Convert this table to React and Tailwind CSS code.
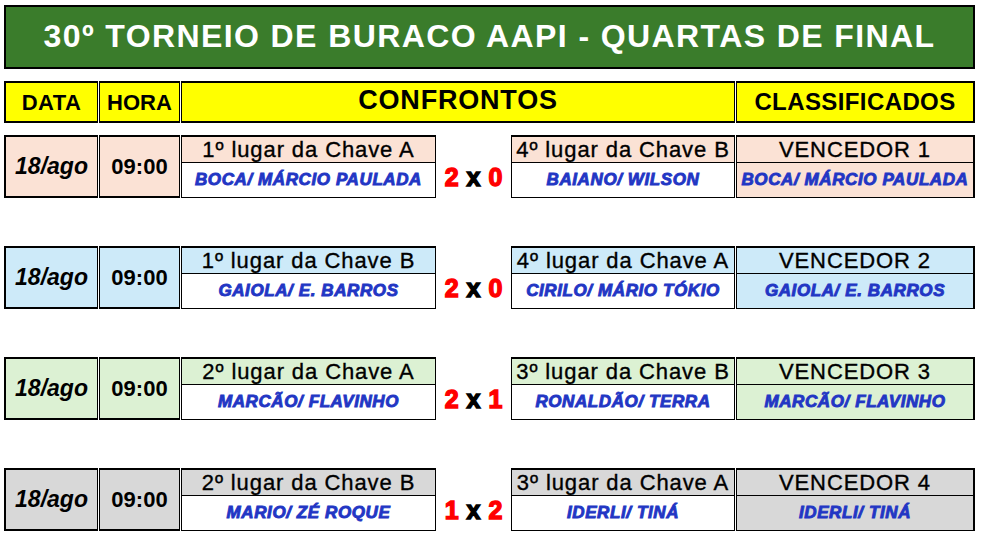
const matches = [
  {
    bg: 'bg-[#fbe2d5]',
    a: '1º lugar da Chave A',
    aTeam: 'BOCA/ MÁRCIO PAULADA',
    s1: '2',
    s2: '0',
    b: '4º lugar da Chave B',
    bTeam: 'BAIANO/ WILSON',
    v: 'VENCEDOR 1',
    winner: 'BOCA/ MÁRCIO PAULADA',
  },
  {
    bg: 'bg-[#cdeaf9]',
    a: '1º lugar da Chave B',
    aTeam: 'GAIOLA/ E. BARROS',
    s1: '2',
    s2: '0',
    b: '4º lugar da Chave A',
    bTeam: 'CIRILO/ MÁRIO TÓKIO',
    v: 'VENCEDOR 2',
    winner: 'GAIOLA/ E. BARROS',
  },
  {
    bg: 'bg-[#dcf1d3]',
    a: '2º lugar da Chave A',
    aTeam: 'MARCÃO/ FLAVINHO',
    s1: '2',
    s2: '1',
    b: '3º lugar da Chave B',
    bTeam: 'RONALDÃO/ TERRA',
    v: 'VENCEDOR 3',
    winner: 'MARCÃO/ FLAVINHO',
  },
  {
    bg: 'bg-[#d8d8d8]',
    a: '2º lugar da Chave B',
    aTeam: 'MARIO/ ZÉ ROQUE',
    s1: '1',
    s2: '2',
    b: '3º lugar da Chave A',
    bTeam: 'IDERLI/ TINÁ',
    v: 'VENCEDOR 4',
    winner: 'IDERLI/ TINÁ',
  },
];

// names are Arial Black italic in the sheet, faked with a stroke
const teamText =
  'text-[17px] font-bold italic tracking-[0.6px] text-[#2236c4] [-webkit-text-stroke:0.9px_#2236c4] whitespace-nowrap';
const placeText =
  'text-[22px] tracking-[0.9px] text-black [-webkit-text-stroke:0.35px_black] whitespace-nowrap';

const TeamCell = ({ width, bg, place, team, winnerCol }) => (
  <div className={`flex flex-col border-t-2 border-b border-black ${width}`}>
    <div className={`flex h-[26px] items-center justify-center border-b border-black ${bg} ${placeText}`}>
      {place}
    </div>
    <div className={`flex flex-1 items-center justify-center ${winnerCol ? bg : 'bg-white'} ${teamText}`}>
      {team}
    </div>
  </div>
);

const MatchRow = ({ m }) => (
  <div className="flex h-[63px] gap-px">
    <div className={`flex w-[94px] items-center justify-center border-y-2 border-l-2 border-r border-black ${m.bg} text-[23px] font-bold italic`}>
      18/ago
    </div>
    <div className={`flex w-[81px] items-center justify-center border-y-2 border-x border-black ${m.bg} text-[22px] font-bold`}>
      09:00
    </div>
    <div className="flex w-[554px]">
      <div className="flex border-l border-r border-black">
        <TeamCell width="w-[253px]" bg={m.bg} place={m.a} team={m.aTeam} />
      </div>
      <div className="flex w-[76px] flex-col">
        <div className="h-[28px]" />
        <div className="flex flex-1 items-center justify-center gap-[8px] pb-[2px] text-[25px] font-bold [-webkit-text-stroke:1.4px_currentColor]">
          <span className="text-[#ff0000]">{m.s1}</span>
          <span className="text-black">x</span>
          <span className="text-[#ff0000]">{m.s2}</span>
        </div>
      </div>
      <div className="flex border-l border-r border-black">
        <TeamCell width="w-[222px]" bg={m.bg} place={m.b} team={m.bTeam} />
      </div>
    </div>
    <div className="flex border-l border-r-2 border-black">
      <TeamCell width="w-[236px]" bg={m.bg} place={m.v} team={m.winner} winnerCol />
    </div>
  </div>
);

export default function App() {
  return (
    <div className="min-h-[540px] w-[981px] bg-white pl-[4px] pt-[5px] font-['Liberation_Sans',Arial,sans-serif] text-black">
      <div className="flex h-[64px] w-[971px] items-center justify-center border-2 border-black bg-[#3a7c2b] pb-[2px] text-[32px] font-bold tracking-[1.4px] text-white whitespace-nowrap">
        30º TORNEIO DE BURACO AAPI - QUARTAS DE FINAL
      </div>

      <div className="mt-[12px] flex h-[42px] gap-px font-bold">
        <div className="flex w-[94px] items-center justify-center border-y-2 border-l-2 border-r border-black bg-[#ffff00] text-[22px] tracking-[0.4px]">
          DATA
        </div>
        <div className="flex w-[81px] items-center justify-center border-y-2 border-x border-black bg-[#ffff00] text-[22px]">
          HORA
        </div>
        <div className="flex w-[554px] items-center justify-center border-y-2 border-x border-black bg-[#ffff00] pb-[3px] text-[27px] tracking-[0.8px]">
          CONFRONTOS
        </div>
        <div className="flex w-[239px] items-center justify-center border-y-2 border-l border-r-2 border-black bg-[#ffff00] text-[24px] tracking-[0.4px]">
          CLASSIFICADOS
        </div>
      </div>

      <div className="mt-[12px] flex flex-col gap-[48px]">
        {matches.map((m) => (
          <MatchRow key={m.v} m={m} />
        ))}
      </div>
    </div>
  );
}
